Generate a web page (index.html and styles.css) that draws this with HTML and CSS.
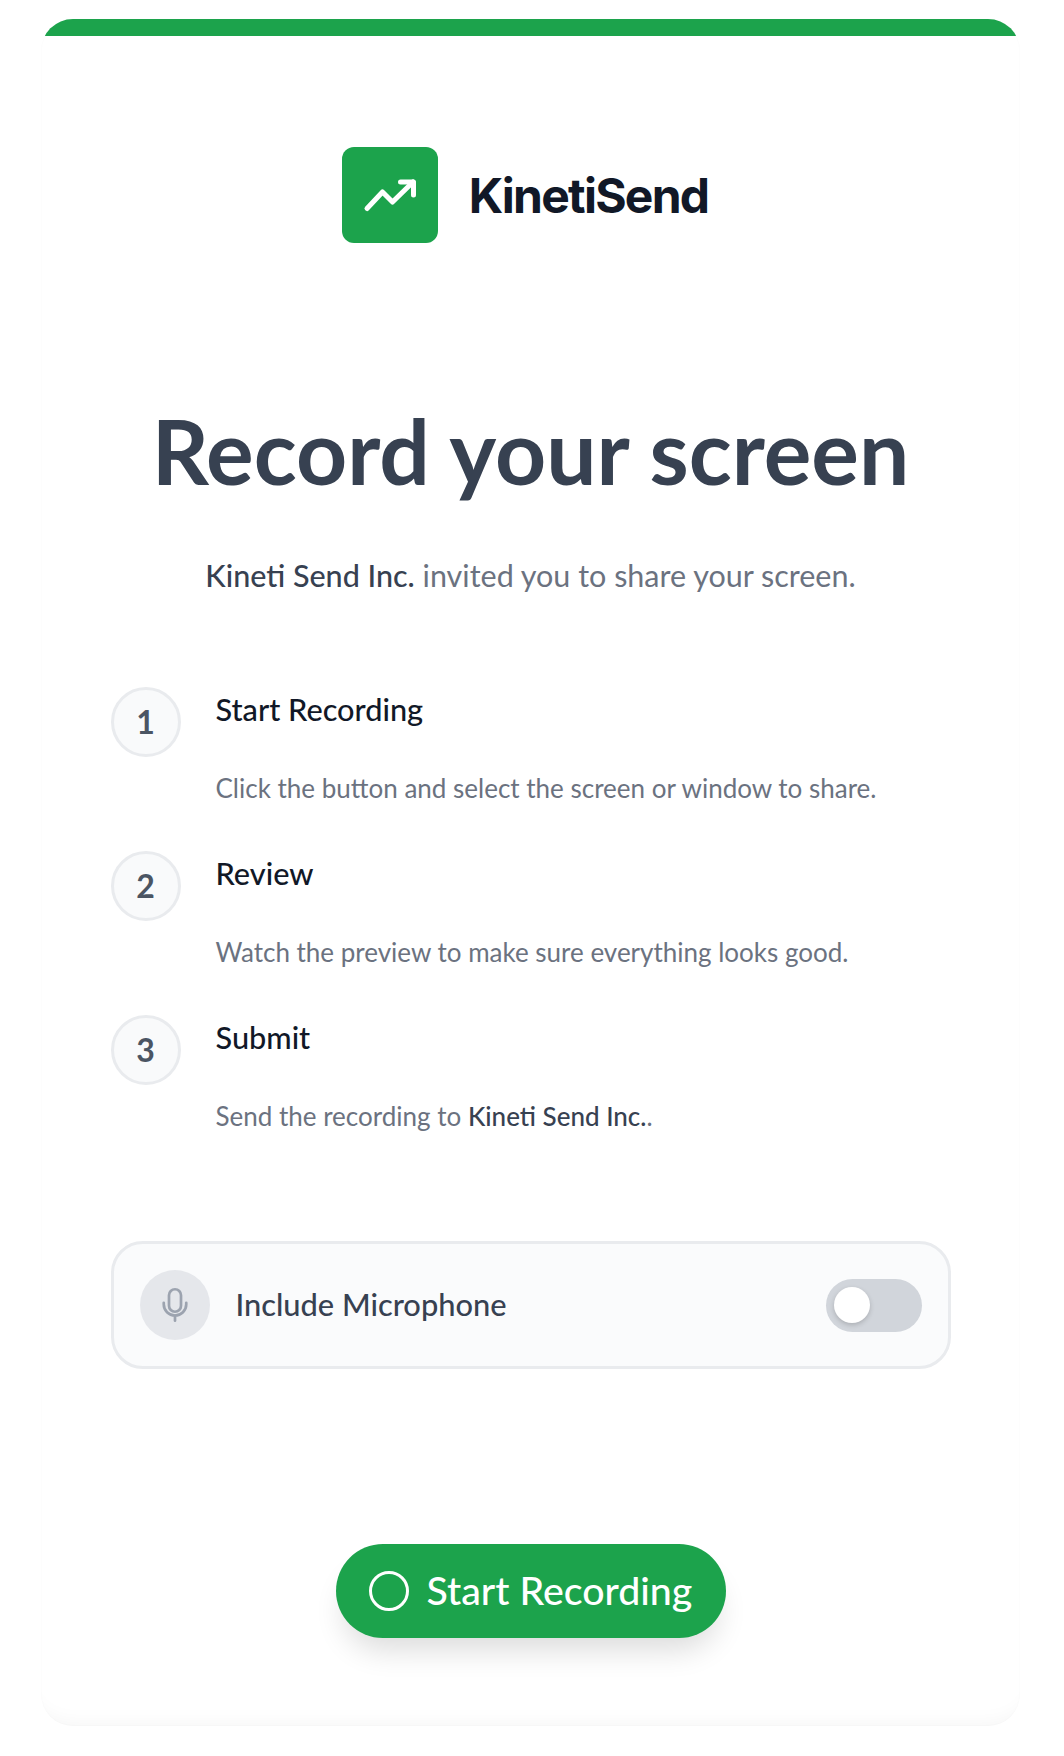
FILE: index.html
```html
<!DOCTYPE html>
<html lang="en">
<head>
    <meta charset="UTF-8">
    <meta name="viewport" content="width=device-width, initial-scale=1.0">
    <title>Record your screen - KinetiSend</title>
    <link rel="stylesheet" href="styles.css">
</head>
<body>
    <div class="card">
        <div class="top-bar"></div>

        <div class="brand">
            <div class="brand-icon">
                <svg width="56" height="56" viewBox="0 0 56 56" fill="none" stroke="#fff" stroke-width="5" stroke-linecap="round" stroke-linejoin="round">
                    <path d="M5 41.5 20.5 25l10 10L51 15"/>
                    <path d="M38.5 15H51.5V28"/>
                </svg>
            </div>
            <span class="brand-name">KinetiSend</span>
        </div>

        <h1>Record your screen</h1>
        <p class="invite"><strong>Kineti Send Inc.</strong> invited you to share your screen.</p>

        <div class="steps">
            <div class="step">
                <div class="step-num">1</div>
                <div class="step-body">
                    <h3>Start Recording</h3>
                    <p>Click the button and select the screen or window to share.</p>
                </div>
            </div>
            <div class="step">
                <div class="step-num">2</div>
                <div class="step-body">
                    <h3>Review</h3>
                    <p>Watch the preview to make sure everything looks good.</p>
                </div>
            </div>
            <div class="step">
                <div class="step-num">3</div>
                <div class="step-body">
                    <h3>Submit</h3>
                    <p>Send the recording to <strong>Kineti Send Inc.</strong>.</p>
                </div>
            </div>
        </div>

        <div class="mic-panel">
            <div class="mic-icon">
                <svg width="36" height="36" viewBox="0 0 24 24" fill="none" stroke="#9ca3af" stroke-width="1.8" stroke-linecap="round">
                    <rect x="8" y="1.5" width="8" height="15" rx="4"/>
                    <path d="M4.5 10.5v1a7.5 7.5 0 0 0 15 0v-1"/>
                    <path d="M12 19v3.5"/>
                </svg>
            </div>
            <span class="mic-label">Include Microphone</span>
            <div class="toggle"><div class="knob"></div></div>
        </div>

        <button class="start-btn" type="button">
            <span class="ring"></span>
            Start Recording
        </button>
    </div>
</body>
</html>
```

FILE: styles.css
```css
* {
    box-sizing: border-box;
}
body {
    margin: 0;
    padding: 19px 44px 30px 41px;
    background: #fff;
    font-family: Lato, Arial, sans-serif;
    color: #374151;
}
.card {
    height: 1707px;
    border-radius: 32px;
    overflow: hidden;
    background: #fff;
    display: flex;
    flex-direction: column;
    align-items: center;
    box-shadow: inset 0 -22px 22px -22px rgba(0, 0, 0, 0.05), inset 0 0 2px rgba(0, 0, 0, 0.03);
}
.top-bar {
    width: 100%;
    height: 17px;
    background: #1ca34c;
    flex-shrink: 0;
}
.brand {
    display: flex;
    align-items: center;
    gap: 31px;
    margin-top: 111px;
    padding-right: 11px;
}
.brand-icon {
    width: 96px;
    height: 96px;
    border-radius: 12px;
    background: #1ca34c;
    display: flex;
    align-items: center;
    justify-content: center;
}
.brand-name {
    font-family: Inter, Arial, sans-serif;
    font-size: 48px;
    font-weight: 700;
    letter-spacing: -1.75px;
    color: #111827;
}
h1 {
    margin: 164px 0 0;
    font-size: 89.2px;
    line-height: 88px;
    font-weight: 700;
    color: #374151;
}
.invite {
    margin: 56px 0 0;
    font-size: 30.5px;
    line-height: 48px;
    color: #6b7280;
}
.invite strong, .step-body strong {
    font-weight: 500;
    color: #374151;
}
.steps {
    width: 840px;
    margin-top: 88px;
    display: flex;
    flex-direction: column;
    gap: 45px;
}
.step {
    display: flex;
    gap: 35px;
}
.step-num {
    width: 70px;
    height: 70px;
    flex-shrink: 0;
    border-radius: 50%;
    border: 3px solid #e9ebee;
    background: #f9fafb;
    display: flex;
    align-items: center;
    justify-content: center;
    padding-bottom: 1px;
    font-size: 32px;
    font-weight: 700;
    color: #4b5563;
}
.step-body h3 {
    margin: 0;
    font-size: 30.7px;
    line-height: 46px;
    font-weight: 500;
    color: #111827;
}
.step-body p {
    margin: 37px 0 0;
    font-size: 26px;
    line-height: 36px;
    color: #6b7280;
}
.mic-panel {
    width: 840px;
    height: 128px;
    margin-top: 107px;
    padding: 0 26px;
    border: 3px solid #e9ebee;
    border-radius: 32px;
    background: #fafbfc;
    display: flex;
    align-items: center;
}
.mic-icon {
    width: 70px;
    height: 70px;
    border-radius: 50%;
    background: #e5e7eb;
    display: flex;
    align-items: center;
    justify-content: center;
}
.mic-label {
    margin: 0 0 2px 26px;
    font-size: 30.8px;
    font-weight: 500;
    color: #374151;
}
.toggle {
    width: 96px;
    height: 53px;
    margin-left: auto;
    padding: 8px;
    border-radius: 27px;
    background: #d1d5db;
    display: flex;
    align-items: center;
}
.knob {
    width: 36px;
    height: 36px;
    border-radius: 50%;
    background: #fff;
    box-shadow: 0 2px 5px rgba(0, 0, 0, 0.18);
}
.start-btn {
    width: 390px;
    height: 94px;
    margin-top: 175px;
    padding: 0 0 4px 33px;
    border: none;
    border-radius: 47px;
    background: #1ca34c;
    color: #fff;
    font-family: Lato, Arial, sans-serif;
    font-size: 39.3px;
    font-weight: 500;
    display: flex;
    align-items: center;
    gap: 18px;
    box-shadow: 0 20px 30px -8px rgba(0, 0, 0, 0.14);
}
.ring {
    width: 40px;
    height: 40px;
    margin-top: 4px;
    border: 3.5px solid #fff;
    border-radius: 50%;
}
```
